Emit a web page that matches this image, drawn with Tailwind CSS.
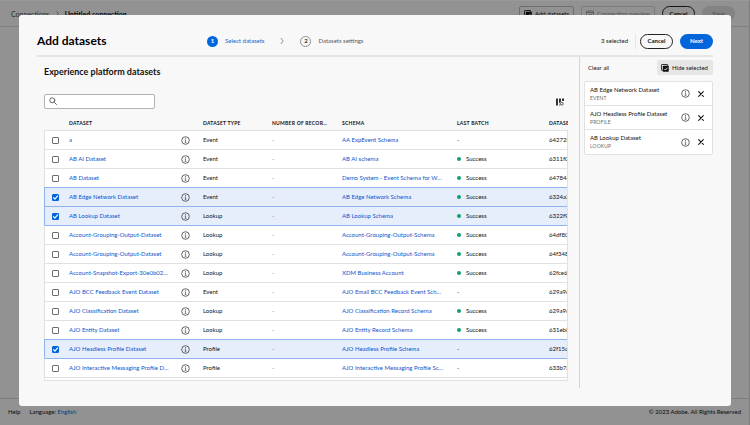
<!DOCTYPE html>
<html lang="en" class="h-full">

<head>
    <meta charset="utf-8" />
    <meta name="viewport" content="width=device-width, initial-scale=1" />
    <script src="https://cdn.jsdelivr.net/npm/@tailwindcss/browser@4"></script>
    <title>Add datasets</title>
</head>

<body class="relative h-full overflow-hidden bg-[#f3f3f3] font-['Lato','Open_Sans',sans-serif] text-[6px] leading-[10px] text-[#111]">
    <svg class="hidden">
        <symbol id="info" viewBox="0 0 18 18">
            <circle cx="9" cy="9" r="7.600" fill="none" stroke="currentColor" stroke-width="1.5" />
            <circle cx="9" cy="5.500" r="1.100" fill="currentColor" />
            <path d="M7.500 8.200h1.700v4.300M7.300 12.700h3.600" fill="none" stroke="currentColor" stroke-width="1.200" />
        </symbol>
        <symbol id="close" viewBox="0 0 12 12">
            <path d="M2.500 2.500l7 7M9.500 2.500l-7 7" fill="none" stroke="currentColor" stroke-width="1.6" stroke-linecap="round" />
        </symbol>
        <symbol id="check" viewBox="0 0 12 12">
            <path d="M2.5 6.2l2.5 2.6 4.6-5.6" fill="none" stroke="currentColor" stroke-width="2" stroke-linecap="round" stroke-linejoin="round" />
        </symbol>
        <symbol id="data-check" viewBox="0 0 18 18">
            <path d="M4 14.500H2.500a1.500 1.500 0 0 1-1.500-1.500V2.500A1.500 1.500 0 0 1 2.500 1h11A1.500 1.500 0 0 1 15 2.500V4" fill="none" stroke="currentColor" stroke-width="2" />
            <rect x="4" y="4" width="13.500" height="13.500" rx="1.500" fill="currentColor" />
            <path d="M7.500 11l2.500 2.600 4.500-5.300" fill="none" stroke="#fff" stroke-width="1.800" />
        </symbol>
    </svg>

    <!-- Page behind the dialog -->
    <div class="flex h-full flex-col border-t border-r border-t-white border-r-[#d0d0d0]">
        <header class="flex h-[26px] items-center border-b border-[#d5d5d5] px-[11px] text-[7px]">
            <a href="#" class="text-[#4b4b4b]">Connections</a>
            <svg class="mx-[5px] size-[5px]" viewBox="0 0 10 10" fill="none" stroke="#6e6e6e" stroke-width="1.6">
                <path d="M3 1l4 4-4 4" />
            </svg>
            <span class="font-bold">Untitled connection</span>
            <div class="ml-auto flex items-center gap-[7px] pr-[3px] text-[6px]">
                <button class="flex h-[15px] w-[55px] items-center justify-center gap-[3px] rounded-[2px] border border-[#b8b8b8]">
                    <svg class="size-[8px]"><use href="#data-check" /></svg>Add datasets
                </button>
                <button class="flex h-[15px] w-[74px] items-center justify-center gap-[3px] rounded-[2px] border border-[#d0d0d0] text-[#8e8e8e]">
                    <svg class="size-[8px]" viewBox="0 0 16 16" fill="none" stroke="currentColor" stroke-width="1.6">
                        <rect x="1" y="2" width="14" height="12" rx="1" />
                        <path d="M1 5h14M4 12l3-4 3 2 2-3" />
                    </svg>Connection preview
                </button>
                <button class="h-[15px] w-[33px] rounded-full border border-[#222] font-bold">Cancel</button>
                <button class="h-[15px] w-[33px] rounded-full bg-[#dadada] font-bold text-[#8e8e8e]">Save</button>
            </div>
        </header>
        <footer class="mt-auto flex h-[27px] items-center gap-[9px] border-t border-[#d0d0d0] px-[8px]">
            <a href="#">Help</a>
            <span>Language: <a href="#" class="text-[#0d66d0]">English</a></span>
            <span class="ml-auto">© 2023 Adobe. All Rights Reserved</span>
        </footer>
    </div>

    <div class="absolute inset-0 flex bg-black/40 px-[19px] pt-[15px] pb-[19px]">
        <div role="dialog" aria-labelledby="title" class="flex min-w-0 flex-1 flex-col rounded-[3px] bg-[#f8f8f8] px-[18px] pb-[18px]">
            <!-- Dialog header -->
            <div class="flex h-[42px] shrink-0 items-center border-b-2 border-[#e6e6e6] pt-[14px] pb-[2px]">
                <h1 id="title" class="w-[170px] text-[12px] leading-[20px] font-bold text-black">Add datasets</h1>
                <ol class="flex items-center">
                    <li class="flex items-center gap-[7px] text-[#0d66d0]">
                        <span class="flex size-[11px] items-center justify-center rounded-full bg-[#0265dc] font-bold text-white">1</span>Select datasets
                    </li>
                    <li class="mx-[15px]">
                        <svg class="size-[6px]" viewBox="0 0 10 10" fill="none" stroke="#8e8e8e" stroke-width="1.6">
                            <path d="M3 0l4 5-4 5" />
                        </svg>
                    </li>
                    <li class="flex items-center gap-[7px] text-[#5a5a5a]">
                        <span class="flex size-[11px] items-center justify-center rounded-full border border-[#8e8e8e] font-bold text-[#333]">2</span>Datasets settings
                    </li>
                </ol>
                <div class="ml-auto flex items-center">
                    <span class="mr-[7px]">3 selected</span>
                    <div class="mr-[4px] h-[15px] w-px bg-[#e6e6e6]"></div>
                    <button class="mr-[7px] h-[15px] w-[33px] rounded-full border border-[#222] font-bold">Cancel</button>
                    <button class="h-[15px] w-[33px] rounded-full bg-[#0265dc] font-bold text-white">Next</button>
                </div>
            </div>

            <div class="flex min-h-0 flex-1">
                <section class="min-w-0 flex-1 border-r border-[#d5d5d5] pr-[11px] pl-[7px]">
                    <h2 class="pt-[8px] text-[9px] leading-[14px] font-bold">Experience platform datasets</h2>
                    <div class="mt-[15px] flex items-center justify-between">
                        <label class="relative block w-[111px]">
                            <span class="sr-only">Search datasets</span>
                            <svg class="absolute top-[3px] left-[5px] size-[8px]" viewBox="0 0 16 16" fill="none" stroke="#555" stroke-width="1.8" stroke-linecap="round">
                                <circle cx="6.500" cy="6.500" r="5" />
                                <path d="M10.500 10.500l4.500 4.500" />
                            </svg>
                            <input type="search" class="block h-[15px] w-full rounded-[2px] border border-[#b1b1b1] bg-white pl-4 outline-none" />
                        </label>
                        <button aria-label="Column settings" class="mr-1">
                            <svg class="size-[8px]" viewBox="0 0 16 16" fill="#333">
                                <path d="M0 1h4v14H0zM6 1h4v6l-4 4zM12 1h4v5h-4z" />
                                <circle cx="11.500" cy="11.500" r="2.800" fill="none" stroke="#333" stroke-width="1.700" />
                                <path d="M6 12v3h2z" />
                            </svg>
                        </button>
                    </div>

                    <div class="relative mt-[11px] overflow-hidden">
                        <table class="w-[620px] table-fixed border-separate border-spacing-0 text-left">
                            <colgroup>
                                <col class="w-[25px]" />
                                <col class="w-[112px]" />
                                <col class="w-[22px]" />
                                <col class="w-[69px]" />
                                <col class="w-[70px]" />
                                <col class="w-[115px]" />
                                <col class="w-[92px]" />
                                <col />
                            </colgroup>
                            <thead class="text-[5px] tracking-wider">
                                <tr class="h-[10px] align-top leading-[7px]">
                                    <th></th>
                                    <th>DATASET</th>
                                    <th></th>
                                    <th>DATASET TYPE</th>
                                    <th class="truncate pr-3">NUMBER OF RECORDS</th>
                                    <th>SCHEMA</th>
                                    <th>LAST BATCH</th>
                                    <th>DATASET ID</th>
                                </tr>
                            </thead>
                            <tbody id="rows"></tbody>
                        </table>
                        <div class="h-[4px] border border-[#e1e1e1] bg-white"></div>
                        <div class="absolute top-[10px] right-0 bottom-0 w-px bg-[#e1e1e1]"></div>
                    </div>
                </section>

                <!-- Selected datasets -->
                <aside class="w-[133px] shrink-0 pt-[3px] pl-[4px]">
                    <div class="flex items-center justify-between pl-[4px]">
                        <button>Clear all</button>
                        <button class="flex h-[15px] w-[56px] items-center gap-[3px] rounded-[2px] bg-[#e6e6e6] px-[4px]">
                            <svg class="size-[8px]"><use href="#data-check" /></svg>Hide selected
                        </button>
                    </div>
                    <ul id="selected" class="mt-[6px] divide-y divide-[#e1e1e1] rounded-[2px] border border-[#e1e1e1] bg-white"></ul>
                </aside>
            </div>
        </div>
    </div>

    <script>
        const datasets = [
            ['a', 'Event', 'AA ExpEvent Schema', false, '64272b7c', false],
            ['AB AI Dataset', 'Event', 'AB AI schema', true, '6311f07a', false],
            ['AB Dataset', 'Event', 'Demo System - Event Schema for Website', true, '64784c1e', false],
            ['AB Edge Network Dataset', 'Event', 'AB Edge Network Schema', true, '6324a2b0', true],
            ['AB Lookup Dataset', 'Lookup', 'AB Lookup Schema', true, '6322f9d4', true],
            ['Account-Grouping-Output-Dataset', 'Lookup', 'Account-Grouping-Output-Schema', true, '64df80a1', false],
            ['Account-Grouping-Output-Dataset', 'Lookup', 'Account-Grouping-Output-Schema', true, '64f348c2', false],
            ['Account-Snapshot-Export-30e0b020-4f1a', 'Lookup', 'XDM Business Account', true, '62fce64b', false],
            ['AJO BCC Feedback Event Dataset', 'Event', 'AJO Email BCC Feedback Event Schema', false, '629a96d0', false],
            ['AJO Classification Dataset', 'Lookup', 'AJO Classification Record Schema', true, '629a96e1', false],
            ['AJO Entity Dataset', 'Lookup', 'AJO Entity Record Schema', true, '631eb8f2', false],
            ['AJO Headless Profile Dataset', 'Profile', 'AJO Headless Profile Schema', false, '62f15c8a', true],
            ['AJO Interactive Messaging Profile Dataset', 'Profile', 'AJO Interactive Messaging Profile Schema', false, '633b7a03', false]
        ];

        // A selected row draws its lower line on the row that follows
        document.getElementById('rows').innerHTML = datasets.map(([name, type, schema, success, id, selected], i) => {
            const marked = selected || (i > 0 && datasets[i - 1][5]);
            const line = marked ? 'border-t border-t-[#8fb3ee]' : 'border-t border-t-[#e1e1e1]';
            const edge = selected ? 'border-l border-l-[#8fb3ee]' : 'border-l border-l-[#e1e1e1]';
            return `
                <tr class="h-[19px] ${selected ? 'bg-[#e6eefc]' : 'bg-white'}">
                    <td class="${line} ${edge} pl-[7px]">
                        <span class="relative block size-[7px]">
                            <input type="checkbox" aria-label="Select ${name}" ${selected ? 'checked' : ''}
                                class="block size-[7px] appearance-none rounded-[1px] border border-[#6e6e6e] bg-white checked:border-[#0265dc] checked:bg-[#0265dc]" />
                            ${selected ? '<svg class="pointer-events-none absolute inset-0 size-[7px] text-white"><use href="#check" /></svg>' : ''}
                        </span>
                    </td>
                    <td class="${line} truncate pr-[10px] text-[#0d55cc]"><a href="#">${name}</a></td>
                    <td class="${line} text-[#333]"><button aria-label="Info" class="block"><svg class="size-[9px]"><use href="#info" /></svg></button></td>
                    <td class="${line}">${type}</td>
                    <td class="${line} text-[#e34850]">-</td>
                    <td class="${line} truncate pr-[13px] text-[#0d55cc]"><a href="#">${schema}</a></td>
                    <td class="${line}">${success ? '<span class="flex items-center gap-[5px]"><i class="size-[4px] rounded-full bg-[#12a168]"></i>Success</span>' : '-'}</td>
                    <td class="${line}">${id}</td>
                </tr>`;
        }).join('');

        const chosen = [
            ['AB Edge Network Dataset', 'EVENT'],
            ['AJO Headless Profile Dataset', 'PROFILE'],
            ['AB Lookup Dataset', 'LOOKUP']
        ];

        document.getElementById('selected').innerHTML = chosen.map(([name, type]) => `
            <li class="flex h-[24px] items-center gap-[7px] pr-[7px] pl-[5px]">
                <div class="min-w-0 flex-1 leading-[9px]">
                    <div class="truncate">${name}</div>
                    <div class="text-[5px] tracking-wide text-[#6e6e6e]">${type}</div>
                </div>
                <button aria-label="Info" class="text-[#333]"><svg class="size-[9px]"><use href="#info" /></svg></button>
                <button aria-label="Remove"><svg class="size-[8px]"><use href="#close" /></svg></button>
            </li>`).join('');
    </script>
</body>

</html>
